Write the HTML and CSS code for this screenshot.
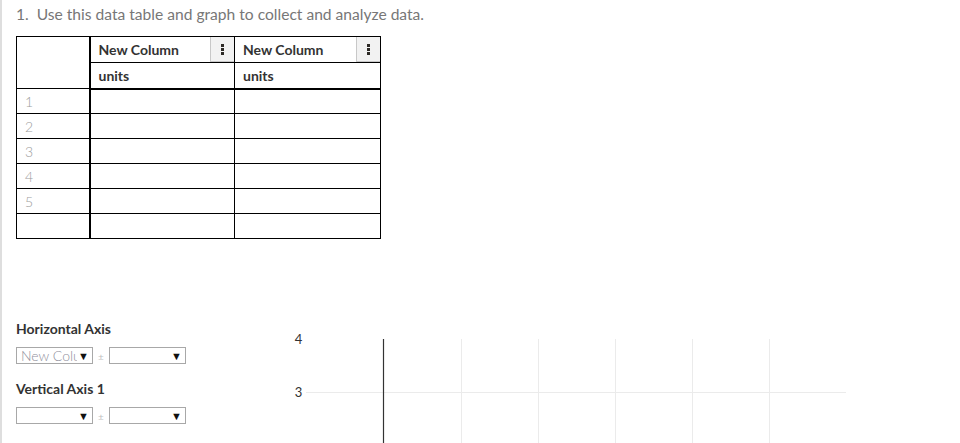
FILE: index.html
```html
<!DOCTYPE html>
<html lang="en">
<head>
<meta charset="utf-8">
<title>Data table and graph</title>
<link rel="stylesheet" href="styles.css">
</head>
<body>
<div class="page">
  <p class="prompt">1.&nbsp; Use this data table and graph to collect and analyze data.</p>

  <table class="data-table">
    <colgroup>
      <col class="c-num">
      <col class="c-data">
      <col class="c-data2">
    </colgroup>
    <thead>
      <tr class="r-head">
        <th class="corner" rowspan="2"></th>
        <th class="colhead-cell">
          <div class="colhead">
            <span class="colname">New Column</span>
            <span class="menu-btn"><i></i><i></i><i></i></span>
          </div>
        </th>
        <th class="colhead-cell">
          <div class="colhead">
            <span class="colname">New Column</span>
            <span class="menu-btn"><i></i><i></i><i></i></span>
          </div>
        </th>
      </tr>
      <tr class="r-units">
        <th class="units">units</th>
        <th class="units">units</th>
      </tr>
    </thead>
    <tbody>
      <tr><td class="num">1</td><td></td><td></td></tr>
      <tr><td class="num">2</td><td></td><td></td></tr>
      <tr><td class="num">3</td><td></td><td></td></tr>
      <tr><td class="num">4</td><td></td><td></td></tr>
      <tr><td class="num">5</td><td></td><td></td></tr>
      <tr><td class="num"></td><td></td><td></td></tr>
    </tbody>
  </table>

  <div class="lower">
    <div class="controls">
      <div class="axis-label">Horizontal Axis</div>
      <div class="select-row">
        <div class="fake-select"><span class="sel-text">New Column</span><span class="sel-arrow">&#9660;</span></div>
        <span class="pm">&plusmn;</span>
        <div class="fake-select"><span class="sel-text"></span><span class="sel-arrow">&#9660;</span></div>
      </div>
      <div class="axis-label second">Vertical Axis 1</div>
      <div class="select-row">
        <div class="fake-select"><span class="sel-text"></span><span class="sel-arrow">&#9660;</span></div>
        <span class="pm">&plusmn;</span>
        <div class="fake-select"><span class="sel-text"></span><span class="sel-arrow">&#9660;</span></div>
      </div>
    </div>
    <svg class="chart" width="570" height="130" viewBox="0 0 570 130">
      <g class="grid">
        <line x1="171.5" y1="20" x2="171.5" y2="130"/>
        <line x1="248.5" y1="20" x2="248.5" y2="130"/>
        <line x1="325.5" y1="20" x2="325.5" y2="130"/>
        <line x1="402.5" y1="20" x2="402.5" y2="130"/>
        <line x1="479.5" y1="20" x2="479.5" y2="130"/>
        <line x1="16" y1="73.5" x2="556" y2="73.5"/>
      </g>
      <line class="axis" x1="93.5" y1="20" x2="93.5" y2="130"/>
      <text class="tick" x="8.5" y="24.5">4</text>
      <text class="tick" x="8.5" y="77.5">3</text>
    </svg>
  </div>
</div>
</body>
</html>
```

FILE: styles.css
```css
html, body {
  margin: 0;
  padding: 0;
  background: #fff;
}

body {
  font-family: Lato, "Open Sans", "Liberation Sans", sans-serif;
  color: #333;
}

.page {
  box-sizing: border-box;
  min-height: 443px;
  border-left: 2px solid #dedede;
  padding: 5px 0 0 14px;
  overflow: hidden;
}

.prompt {
  margin: 0;
  font-size: 15.6px;
  line-height: 19px;
  color: #777;
}

/* ---------- data table ---------- */
.data-table {
  margin-top: 12px;
  border-collapse: collapse;
  table-layout: fixed;
  width: 364px;
  font-size: 14px;
}

.c-num { width: 73px; }
.c-data { width: 145px; }
.c-data2 { width: 146px; }

.data-table th,
.data-table td {
  border: 1px solid #000;
  padding: 0;
  text-align: left;
  vertical-align: middle;
}

.data-table .corner,
.data-table .num {
  border-right: 2px solid #000;
}

.r-head { height: 26px; }
.r-units { height: 26px; }
.r-units th { border-bottom: 2px solid #000; }
.data-table tbody tr { height: 25px; }

.colhead {
  display: flex;
  align-items: stretch;
  height: 25px;
}

.colname {
  flex: 1;
  align-self: center;
  padding-left: 8px;
  font-weight: 700;
  color: #333;
  white-space: nowrap;
}

.menu-btn {
  box-sizing: border-box;
  width: 24px;
  display: flex;
  flex-direction: column;
  align-items: center;
  justify-content: center;
  gap: 1px;
  background: #f2f2f2;
  border-left: 1px solid #c8c8c8;
  border-bottom: 1px solid #c8c8c8;
}

.menu-btn i {
  display: block;
  width: 3px;
  height: 3px;
  background: #2d2a26;
}

.units {
  padding-left: 8px !important;
  font-weight: 700;
  color: #333;
}

.num {
  padding-left: 8px !important;
  font-weight: 300;
  color: #9c9c9c;
}

/* ---------- lower area ---------- */
.lower {
  display: flex;
  align-items: flex-start;
  margin-top: 80px;
}

.controls {
  width: 274px;
  flex: none;
}

.axis-label {
  margin-top: 2px;
  font-size: 14px;
  line-height: 16px;
  font-weight: 700;
  color: #333;
}

.axis-label.second {
  margin-top: 17px;
}

.select-row {
  display: flex;
  align-items: center;
  margin-top: 10px;
  height: 17px;
}

.fake-select {
  box-sizing: border-box;
  width: 77px;
  height: 17px;
  border: 1px solid #a8a8a8;
  display: flex;
  align-items: center;
  background: #fff;
}

.sel-text {
  flex: 1;
  overflow: hidden;
  white-space: nowrap;
  text-overflow: clip;
  padding-left: 4px;
  font-size: 14px;
  line-height: 15px;
  font-weight: 300;
  color: #8f8f9c;
}

.sel-arrow {
  flex: none;
  width: 15px;
  font-size: 11px;
  line-height: 15px;
  color: #111;
  text-align: left;
  padding-left: 1px;
  box-sizing: border-box;
}

.pm {
  width: 16px;
  text-align: center;
  font-size: 10px;
  color: #c0c0c0;
}

.chart {
  flex: none;
  display: block;
}

.chart .grid line {
  stroke: #ebebeb;
  stroke-width: 1;
}

.chart .axis {
  stroke: #333;
  stroke-width: 1.2;
}

.chart .tick {
  font-family: Lato, "Open Sans", sans-serif;
  font-size: 13px;
  fill: #333;
  text-anchor: middle;
}
```
